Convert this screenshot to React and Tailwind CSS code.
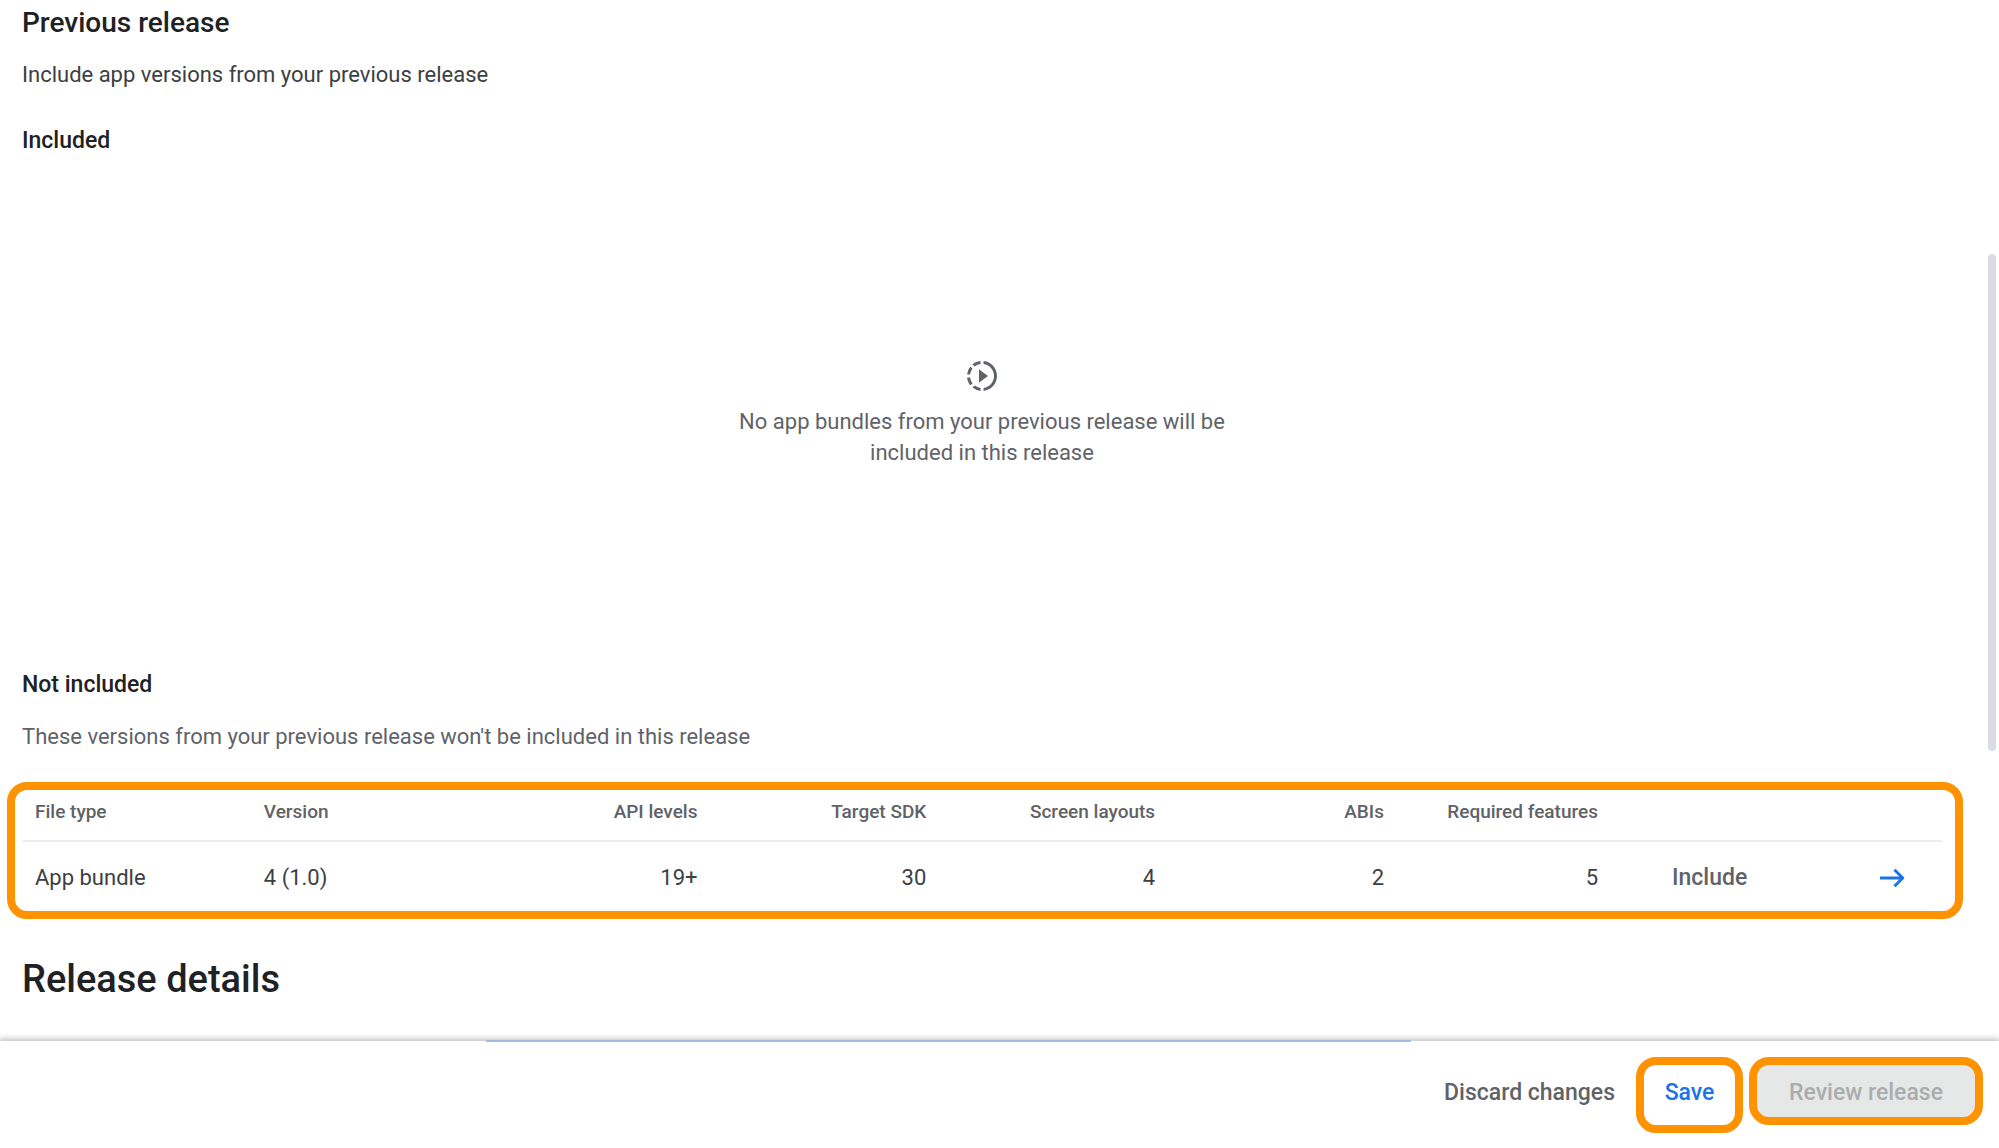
import React from 'react'
import { MdSlowMotionVideo } from 'react-icons/md'

const bundles = [
  {
    id: 4,
    fileType: 'App bundle',
    version: '4 (1.0)',
    apiLevels: '19+',
    targetSdk: 30,
    screenLayouts: 4,
    abis: 2,
    requiredFeatures: 5,
  },
]

const ArrowIcon = () => (
  <svg viewBox="0 0 26 20" className="w-[26px] h-5" fill="none" stroke="currentColor" strokeWidth="3">
    <path d="M1 10H24" />
    <path d="M15.5 1.8L23.7 10L15.5 18.2" strokeLinejoin="round" />
  </svg>
)

const EmptyState = () => (
  <div className="h-[512px] flex flex-col items-center justify-center text-[#5f6368]">
    <MdSlowMotionVideo className="size-9 mb-3" />
    <p className="w-[520px] text-center text-[22px] leading-[31px]">
      No app bundles from your previous release will be included in this release
    </p>
  </div>
)

const BundleTable = ({ rows }) => (
  <table className="w-full table-fixed text-[22px] text-[#3c4043]">
    <thead>
      <tr className="h-[51px] border-b-2 border-[#ebecee] text-[19px] leading-6 text-[#5f6368] [&>th]:font-medium [&>th]:px-3 [&>th]:pb-1.5">
        <th className="text-left">File type</th>
        <th className="text-left">Version</th>
        <th className="text-right">API levels</th>
        <th className="text-right">Target SDK</th>
        <th className="text-right">Screen layouts</th>
        <th className="text-right">ABIs</th>
        <th className="w-[214px] text-right whitespace-nowrap">Required features</th>
        <th className="w-[200px]"></th>
        <th className="w-[132px]"></th>
      </tr>
    </thead>
    <tbody>
      {rows.map((row) => (
        <tr key={row.id} className="h-[70px] [&>td]:px-3 [&>td]:pt-0.5">
          <td>{row.fileType}</td>
          <td>{row.version}</td>
          <td className="text-right">{row.apiLevels}</td>
          <td className="text-right">{row.targetSdk}</td>
          <td className="text-right">{row.screenLayouts}</td>
          <td className="text-right">{row.abis}</td>
          <td className="text-right">{row.requiredFeatures}</td>
          <td>
            <button type="button" className="ml-[50px] text-[23px] font-medium text-[#5f6368]">
              Include
            </button>
          </td>
          <td>
            <a href="#details" aria-label="View details" className="flex justify-end pr-[25px] text-[#1a73e8]">
              <ArrowIcon />
            </a>
          </td>
        </tr>
      ))}
    </tbody>
  </table>
)

const Footer = () => (
  <footer className="relative shrink-0 h-[107px] pt-4 pr-4 flex items-start justify-end bg-white text-[23px] leading-8 font-medium shadow-[0_-1px_6px_1px_rgba(60,64,67,0.35)]">
    <div className="absolute -top-px left-[486px] right-[588px] h-0.5 bg-[#a3bce2]"></div>
    <button type="button" className="mt-5 mr-[21px] text-[#5f6368]">
      Discard changes
    </button>
    <button
      type="button"
      className="h-[76px] w-[107px] mr-1.5 pb-1 border-8 border-[#ff9200] rounded-[20px] text-[#1a73e8]"
    >
      Save
    </button>
    <button
      type="button"
      disabled
      className="h-[68px] w-[234px] pt-1 border-8 border-[#ff9200] rounded-[20px] bg-[#e6e8e7] text-[#aaacad]"
    >
      Review release
    </button>
  </footer>
)

export default function App() {
  return (
    <div className="h-screen flex flex-col overflow-hidden bg-white font-['Roboto',sans-serif]">
      <main className="relative flex-1 min-h-0 overflow-hidden pt-[7px] pl-[22px] pr-[57px] text-[22px] leading-8 text-[#202124]">
        <h2 className="text-[28px] font-medium">Previous release</h2>
        <p className="mt-5 text-[#3c4043]">Include app versions from your previous release</p>

        <h3 className="mt-[34px] text-[23px] font-medium">Included</h3>
        <EmptyState />

        <h3 className="text-[23px] font-medium">Not included</h3>
        <p className="mt-5 text-[#5f6368]">
          These versions from your previous release won't be included in this release
        </p>
        <div className="mt-[29px] -ml-[15px] -mr-[21px] pl-2 pr-[13px] border-8 border-[#ff9200] rounded-[20px]">
          <BundleTable rows={bundles} />
        </div>

        <h1 className="mt-9 text-[38px] leading-[48px] font-medium">Release details</h1>

        <div className="absolute right-[3px] top-[254px] w-2 h-[497px] rounded-full bg-[#dadce0]"></div>
      </main>
      <Footer />
    </div>
  )
}
